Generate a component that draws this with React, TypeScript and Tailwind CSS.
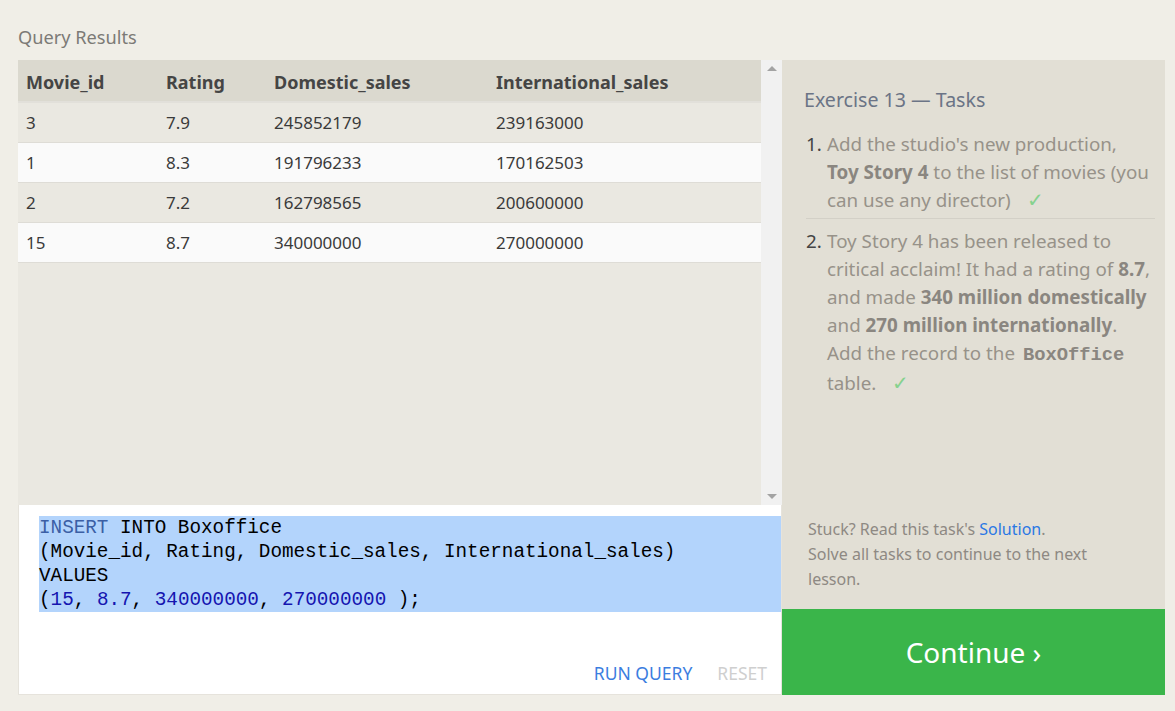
import React from "react";

const rows = [
  ["3", "7.9", "245852179", "239163000"],
  ["1", "8.3", "191796233", "170162503"],
  ["2", "7.2", "162798565", "200600000"],
  ["15", "8.7", "340000000", "270000000"],
];

export default function App() {
  const sans = { fontFamily: '"Noto Sans", "Open Sans", sans-serif' };
  return (
    <div className="w-[1175px] h-[711px] bg-[#f0eee7] overflow-hidden" style={sans}>
      <div className="pl-[18px] pt-[25px] h-[36px] text-[18.2px] leading-[24px] text-[#7c7a76]">Query Results</div>
      <div className="flex ml-[18px] mt-[24px] w-[1147px] h-[635px]">
        {/* left */}
        <div className="w-[764px] flex flex-col">
          <div className="flex h-[445px] bg-[#eae8e1]">
            <div className="flex-1 flex flex-col">
              <div className="h-[43px] pt-[4px] bg-[#dbd9cf] flex items-center text-[18px] font-bold text-[#454545] border-b-2 border-[#e2e0da]">
                <div className="w-[148px] pl-[8px]">Movie_id</div>
                <div className="w-[108px]">Rating</div>
                <div className="w-[222px]">Domestic_sales</div>
                <div>International_sales</div>
              </div>
              {rows.map((r, i) => (
                <div
                  key={i}
                  className={`h-[40px] flex items-center text-[17px] text-[#3a3a3a] border-b border-[#dedcd6] ${i % 2 === 0 ? "bg-[#eae8e1]" : "bg-[#fafafa]"}`}
                >
                  <div className="w-[148px] pl-[8px]">{r[0]}</div>
                  <div className="w-[108px]">{r[1]}</div>
                  <div className="w-[222px]">{r[2]}</div>
                  <div>{r[3]}</div>
                </div>
              ))}
            </div>
            <div className="w-[21px] bg-[#f1f1f1] flex flex-col justify-between items-center py-[6px]">
              <div className="w-0 h-0 border-l-[5px] border-r-[5px] border-b-[5px] border-l-transparent border-r-transparent border-b-[#a3a3a3]" />
              <div className="w-0 h-0 border-l-[5px] border-r-[5px] border-t-[5px] border-l-transparent border-r-transparent border-t-[#a3a3a3]" />
            </div>
          </div>
          <div className="h-[190px] bg-white flex flex-col border border-[#e6e3dc] border-t-0">
            <div
              className="mt-[11px] ml-[20px] bg-[#b3d4fc] text-[19.3px] leading-[24px] text-black"
              style={{ fontFamily: '"Liberation Mono", "DejaVu Sans Mono", monospace' }}
            >
              <div><span className="text-[#3b5fa5]">INSERT</span> INTO Boxoffice</div>
              <div>(Movie_id, Rating, Domestic_sales, International_sales)</div>
              <div>VALUES</div>
              <div>(<span className="text-[#1515b0]">15</span>, <span className="text-[#1515b0]">8.7</span>, <span className="text-[#1515b0]">340000000</span>, <span className="text-[#1515b0]">270000000</span> );</div>
            </div>
            <div className="flex-1" />
            <div className="flex justify-end gap-[25px] pr-[14px] pb-[9px] text-[17.5px] leading-[24px]">
              <span className="text-[#3b7de0]">RUN QUERY</span>
              <span className="text-[#cfcfcf]">RESET</span>
            </div>
          </div>
        </div>
        {/* right */}
        <div className="w-[383px] flex flex-col">
          <div className="flex-1 bg-[#e2dfd5] flex flex-col">
            <div className="pl-[22px] pt-[27px] text-[19.6px] leading-[26px] text-[#6b7486]">Exercise 13 — Tasks</div>
            <ol className="mt-[17px] pl-[24px] pr-[10px] text-[18.8px] leading-[28px] text-[#979289]">
              <li className="flex border-b border-[#d3d0c7] pb-[4px]">
                <span className="w-[21px] text-[#444]">1.</span>
                <span className="flex-1">
                  Add the studio's new production,<br /><b className="text-[#8a8680]">Toy Story 4</b> to the list of movies (you can use any director)<span className="ml-[16px] text-[20px] text-[#86d28e]">✓</span>
                </span>
              </li>
              <li className="flex pt-[8px]">
                <span className="w-[21px] text-[#444]">2.</span>
                <span className="flex-1">
                  Toy Story 4 has been released to critical acclaim! It had a rating of <b className="text-[#8a8680]">8.7</b>, and made <b className="text-[#8a8680]">340 million domestically</b> and <b className="text-[#8a8680]">270 million internationally</b>. Add the record to the{" "}
                  <b className="text-[#8a8680] ml-[3px]" style={{ fontFamily: '"Liberation Mono", monospace' }}>BoxOffice</b> table.<span className="ml-[16px] text-[20px] text-[#86d28e]">✓</span>
                </span>
              </li>
            </ol>
            <div className="flex-1" />
            <div className="pl-[26px] pr-[40px] pb-[17px] text-[16px] leading-[25px] text-[#8e8983]">
              Stuck? Read this task's <span className="text-[#2a78e4]">Solution</span>.<br />
              Solve all tasks to continue to the next lesson.
            </div>
          </div>
          <div className="h-[86px] bg-[#3ab54a] flex items-center justify-center text-white text-[28px]">
            Continue ›
          </div>
        </div>
      </div>
    </div>
  );
}
